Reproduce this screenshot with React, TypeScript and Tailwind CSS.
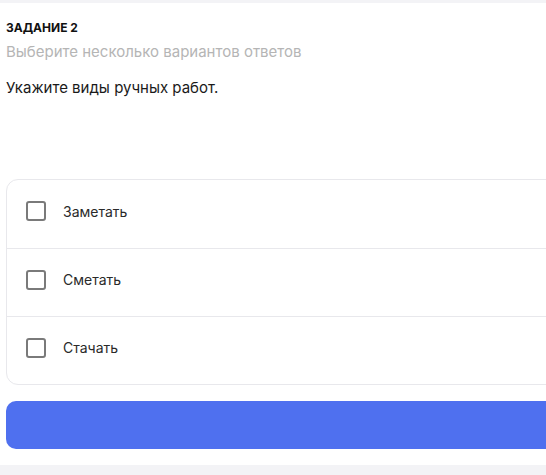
import React from "react";

const options = ["Заметать", "Сметать", "Стачать"];

const Checkbox = () => (
  <span className="block w-[20px] h-[20px] rounded-[3px] border-2 border-[#7a7a7a] bg-white shrink-0" />
);

export default function App() {
  return (
    <div className="w-[546px] h-[475px] overflow-hidden bg-white flex flex-col" style={{ fontFamily: "Inter, 'Noto Sans', sans-serif" }}>
      <div className="h-[3px] bg-[#f3f3f6] shrink-0" />
      <div className="flex-1 pl-[6px]">
        <div className="w-[600px]">
          <div className="pt-[17px] text-[12px] leading-[16px] font-bold text-[#111]">ЗАДАНИЕ 2</div>
          <div className="mt-[6px] text-[15px] leading-[20px] text-[#b5b5b5]">Выберите несколько вариантов ответов</div>
          <div className="mt-[16px] text-[15px] leading-[20px] text-[#1a1a1a]">Укажите виды ручных работ.</div>
          <div className="mt-[81px] border border-[#e8e8ec] rounded-[12px] bg-white">
            {options.map((o, i) => (
              <div key={o} className={"flex items-center gap-[17px] pl-[19px] pb-[6px] h-[68px] " + (i > 0 ? "border-t border-[#e8e8ec]" : "")}>
                <Checkbox />
                <span className="text-[14px] text-[#2a2a2a]">{o}</span>
              </div>
            ))}
          </div>
          <button className="mt-[16px] w-full h-[48px] rounded-[10px] bg-[#4f70ef]" />
        </div>
      </div>
      <div className="h-[10px] bg-[#f3f3f6] shrink-0" />
    </div>
  );
}
